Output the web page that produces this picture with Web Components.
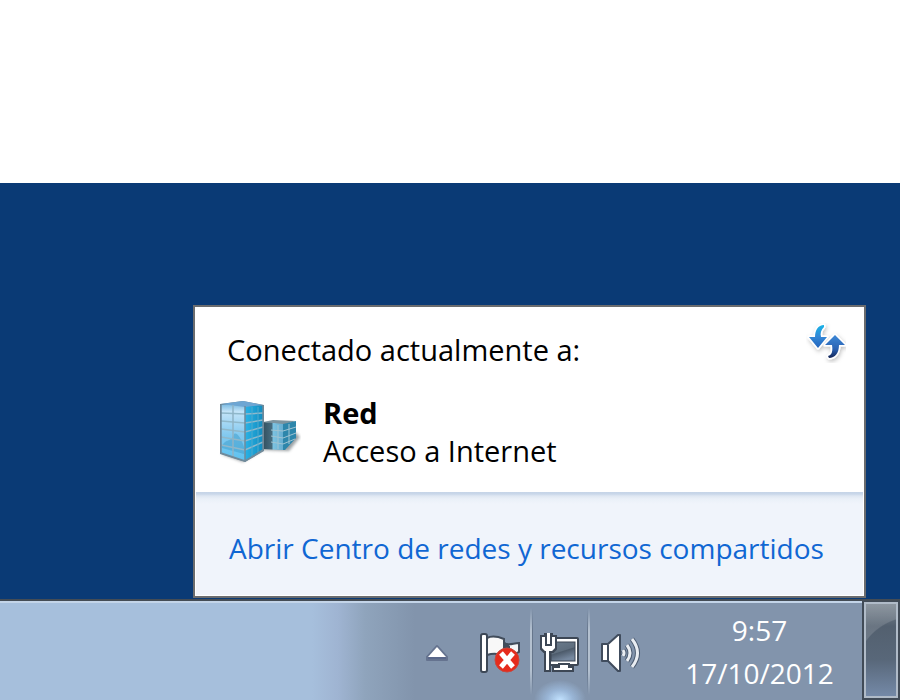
<!DOCTYPE html>
<html lang="es">
<head>
<meta charset="utf-8">
<meta name="viewport" content="width=device-width, initial-scale=1">
<title>Conexión de red</title>
<style>
  html, body { margin: 0; }
  body {
    min-height: 100vh;
    display: flex;
    flex-direction: column;
    background: #fff;
    font-family: "Open Sans", "Noto Sans", sans-serif;
    font-size: 28px;
    line-height: 38px;
    color: #000;
  }
  desk-top { flex: 1; margin-top: 183px; }
</style>
</head>
<body>
<desk-top>
  <network-flyout>
    <span slot="title">Conectado actualmente a:</span>
    <refresh-button slot="action"></refresh-button>
    <network-item>
      <span slot="name">Red</span>
      <span slot="status">Acceso a Internet</span>
    </network-item>
    <span slot="link">Abrir Centro de redes y recursos compartidos</span>
  </network-flyout>
</desk-top>
<task-bar>
  <tray-button kind="chevron" label="Mostrar iconos ocultos"></tray-button>
  <tray-button kind="flag" label="Centro de actividades"></tray-button>
  <tray-button kind="network" label="Red" active></tray-button>
  <tray-button kind="volume" label="Altavoces"></tray-button>
  <tray-clock><span slot="time">9:57</span><span slot="date">17/10/2012</span></tray-clock>
  <show-desktop slot="end"></show-desktop>
</task-bar>

<script>
const define = (name, html, setup) => {
  customElements.define(name, class extends HTMLElement {
    constructor() {
      super();
      const t = document.createElement('template');
      t.innerHTML = html;
      this.attachShadow({ mode: 'open' }).append(t.content.cloneNode(true));
    }
    connectedCallback() { if (setup) setup(this); }
  });
};

define('desk-top', `
<style>
  :host { display: flex; flex-direction: column; justify-content: flex-end; align-items: flex-end;
          box-sizing: border-box; padding: 0 34px 1px 16px; background: #0a3a75; }
</style>
<slot></slot>`);

define('network-flyout', `
<style>
  :host { display: block; box-sizing: border-box; width: 100%; max-width: 673px; background: #fff;
          border: 2px solid #6b6c6e; }
  header { display: flex; justify-content: space-between; align-items: flex-start; padding: 16px 18px 0 32px; font-size: 29px; }
  h1 { margin: 0; padding-top: 8px; font: inherit; }
  main { padding: 25px 24px 22px; font-size: 29px; }
  main { padding-left: 22px; }
  footer { border: 1px solid #fff; border-top: 0; padding: 37px 33px 28px; text-align: left;
           background: linear-gradient(#c5d4e7 0, #c9d7e9 2px, #dfe7f2 4px, #eaf0f8 7px, #f0f4fb 12px); }
  a { color: #1067d3; text-decoration: none; white-space: nowrap; }
</style>
<header><h1><slot name="title"></slot></h1><slot name="action"></slot></header>
<main><slot></slot></main>
<footer><a href="#centro"><slot name="link"></slot></a></footer>`);

define('refresh-button', `
<style>
  :host { display: block; }
  button { display: block; padding: 0; border: 0; background: none; }
  svg { display: block; }
</style>
<button aria-label="Actualizar">
<svg width="40" height="40" viewBox="0 0 40 40">
  <defs>
    <linearGradient id="a" x1="0" y1="0" x2="0" y2="1"><stop offset="0" stop-color="#18b4e8"/><stop offset=".5" stop-color="#3387d6"/><stop offset="1" stop-color="#2465bd"/></linearGradient>
    <linearGradient id="b" x1="0" y1="0" x2="0" y2="1"><stop offset="0" stop-color="#3c88d6"/><stop offset=".6" stop-color="#2b63b4"/><stop offset="1" stop-color="#142455"/></linearGradient>
    <filter id="s" x="-.3" y="-.3" width="1.8" height="1.8"><feDropShadow dx="1" dy="2" stdDeviation="2" flood-opacity=".25"/></filter>
  </defs>
  <g filter="url(#s)" stroke="#fff" stroke-width="3" stroke-linejoin="round" paint-order="stroke">
    <path fill="url(#a)" d="M18 2C12 2 9 7 9 14H3L12 25L21 14H15C14 10 15 7 18 4Z"/>
    <path fill="url(#b)" d="M29 12L39 22H33C33 30 29 35 23 35L22 33C26 32 27 28 26 22H19Z"/>
  </g>
</svg></button>`);

define('network-item', `
<style>
  :host { display: flex; align-items: center; gap: 22px; }
  svg { flex: none; display: block; }
  strong, span { display: block; }
</style>
<svg width="84" height="68" viewBox="0 0 84 68" aria-hidden="true">
  <defs>
    <linearGradient id="l" x1="0" y1="0" x2="0" y2="1"><stop offset="0" stop-color="#6fb4de"/><stop offset=".15" stop-color="#c4e4f8"/><stop offset=".55" stop-color="#83c9ef"/><stop offset="1" stop-color="#5cc2f0"/></linearGradient>
    <linearGradient id="r" x1="0" y1="0" x2="1" y2="0"><stop offset="0" stop-color="#2ab2e5"/><stop offset="1" stop-color="#128cbf"/></linearGradient>
    <linearGradient id="d" x1="0" y1="0" x2="1" y2="0"><stop offset="0" stop-color="#33505f"/><stop offset=".45" stop-color="#476d80"/><stop offset=".5" stop-color="#7cc3e2"/><stop offset="1" stop-color="#66add0"/></linearGradient>
    <filter id="f" x="-.2" y="-.2" width="1.4" height="1.4"><feGaussianBlur stdDeviation="1.5"/></filter>
  </defs>
  <path d="M26 64L46 52L72 53L83 39L78 34L44 48L4 56Z" fill="#4a5358" opacity=".55" filter="url(#f)"/>
  <path d="M46 24L56 22L79 23L66 27Z" fill="#7d949f"/>
  <path d="M46 24L66 26V52L46 51Z" fill="url(#d)"/>
  <path d="M66 26L79 23V40L68 52H66Z" fill="#2d86ab"/>
  <path d="M54 32L66 33L79 29M54 38L66 40L79 35M54 44L66 46L78 41M61 27V51M72 26V46" fill="none" stroke="#9fc4d3" stroke-width="1"/>
  <path d="M3 6L26 3L47 7V53L28 64L3 56Z" fill="#6c8796"/>
  <path d="M4 7L28 5V63L4 55Z" fill="url(#l)"/>
  <path d="M28 5L46 8V52L28 63Z" fill="url(#r)"/>
  <path d="M4 6L26 3L46 7L28 9Z" fill="#6ea6d3"/>
  <path d="M5 48C9 40 14 45 17 36C20 34 24 40 27 49V56L5 50Z" fill="#3e9cca" opacity=".5"/>
  <path d="M4 15L28 16L46 15M4 23L28 25L46 22M4 31L28 34L46 29M4 39L28 43L46 37M4 47L28 52L46 44" fill="none" stroke="#8fb8cb" stroke-width="1.5"/>
  <path d="M16 7V59" fill="none" stroke="#8fb3c6" stroke-width="1.5"/>
  <path d="M35 9V58M41 9V55" fill="none" stroke="#4fa9cd" stroke-width="1"/>
  <path d="M4 7V55L28 63V8M46 8V52L28 63" fill="none" stroke="#708b9c" stroke-width="1.5"/>
</svg>
<div><strong><slot name="name"></slot></strong><span><slot name="status"></slot></span></div>`);

define('task-bar', `
<style>
  :host { display: flex; justify-content: flex-end; align-items: stretch; height: 99px; flex: none;
          border-top: 2px solid #444c55; box-shadow: inset 0 2px #c3d4e8; color: #fff;
          background: linear-gradient(to right, #a6bfdc 0, #a6bfdc calc(100% - 588px), #9fb4d2 calc(100% - 562px), #8fa4bc calc(100% - 535px), #8294ac calc(100% - 485px), #8294ac 100%); }
  nav { display: flex; }
</style>
<nav aria-label="Área de notificación"><slot></slot></nav>
<slot name="end"></slot>`);

const icons = {
  chevron: `<svg width="24" height="18" viewBox="0 0 24 18">
    <path d="M12 2L22 13V16H2V13Z" fill="#59678a" stroke="#65738f" stroke-width="2" stroke-linejoin="round"/>
    <path d="M12 3L21 13H3Z" fill="#fff"/></svg>`,
  flag: `<svg width="42" height="42" viewBox="0 0 42 42">
    <path d="M24 12L28 12C32 13 35 11 40 11V20L32 24L24 22Z" fill="#f4f5f7" stroke="#414c5b" stroke-width="2"/>
    <path d="M8 6C14 3 20 5 25 7V24C19 21 14 21 8 23Z" fill="#f8f8f8" stroke="#414c5b" stroke-width="2"/>
    <path d="M26 10V20L31 18V14Z" fill="#414c5b"/>
    <rect x="2" y="2" width="6" height="38" rx="2" fill="#fff" stroke="#3d4856" stroke-width="2"/>
    <circle cx="28" cy="28" r="12" fill="#e62b1c" stroke="#c8473d"/>
    <path d="M22 21L34 35M34 21L22 35" stroke="#fff" stroke-width="5"/></svg>`,
  network: `<svg width="42" height="42" viewBox="0 0 42 42">
    <defs><linearGradient id="n" x1="0" y1="0" x2=".4" y2="1"><stop offset="0" stop-color="#6b7b8c"/><stop offset=".55" stop-color="#5f6e7e"/><stop offset=".6" stop-color="#4d5b6b"/><stop offset="1" stop-color="#76889f"/></linearGradient></defs>
    <rect x="10" y="6" width="29" height="27" rx="1" fill="#fff" stroke="#3d4755" stroke-width="2"/>
    <rect x="12" y="10" width="24" height="19" fill="url(#n)" stroke="#3d4755"/>
    <path d="M20 32H30V35H34V39H14V35H20Z" fill="#fff" stroke="#3d4755" stroke-width="2"/>
    <rect x="6" y="18" width="5" height="21" fill="#fff" stroke="#3d4755" stroke-width="2"/>
    <path d="M2 4H6V2H13V4H17V17L14 20H5L2 17Z" fill="#3d4755" stroke="#3d4755" stroke-width="2"/>
    <path d="M3 5H6V14H13V5H16V16L13 19H6L3 16Z" fill="#fff"/>
    <rect x="8" y="1" width="3" height="11" fill="#fff"/>
    <rect x="7" y="17" width="3" height="20" fill="#fff"/></svg>`,
  volume: `<svg width="42" height="42" viewBox="0 0 42 42">
    <path d="M2 12H8L18 3H20V39H18L8 29H2Z" fill="#fff" stroke="#404c5d" stroke-width="2" stroke-linejoin="round"/>
    <path d="M8 13V29" stroke="#404c5d" stroke-width="2"/>
    <g fill="none" stroke="#4c5b70" stroke-width="5"><path d="M23 18Q25 21 23 24M27 13Q33 21 27 29M32 7Q43 21 32 35"/></g>
    <g fill="none" stroke="#e9edf2" stroke-width="3"><path d="M23 18Q25 21 23 24M27 13Q33 21 27 29M32 7Q43 21 32 35"/></g></svg>`
};

define('tray-button', `
<style>
  :host { display: flex; width: 60px; }
  :host([kind="chevron"]) { width: 66px; }
  :host([kind="volume"]) { width: 62px; }
  :host([active]) button {
    border-image: linear-gradient(transparent 8%, #b4c1d0 30%, #b4c1d0 70%, transparent 94%) 1;
    background: linear-gradient(transparent 8%, #66768c 30%, #66768c 70%, transparent 94%) 0 0 / 1px 100% no-repeat,
                linear-gradient(transparent 8%, #66768c 30%, #66768c 70%, transparent 94%) 100% 0 / 1px 100% no-repeat,
                radial-gradient(ellipse 26px 20px at 50% 100%, #c2e2ff 0, #a4c5eaaa 50%, transparent 100%); }
  button { flex: 1; display: grid; place-items: center; padding: 4px 0 0; border: 0 solid transparent;
           border-width: 0 2px; background: none; }
  svg { display: block; }
</style>
<button></button>`, el => {
  const b = el.shadowRoot.querySelector('button');
  b.setAttribute('aria-label', el.getAttribute('label'));
  b.innerHTML = icons[el.getAttribute('kind')];
});

define('tray-clock', `
<style>
  :host { display: block; box-sizing: border-box; width: 210px; padding: 8px 0 0 5px; text-align: center; line-height: 43px; }
  time { display: block; }
</style>
<time><slot name="time"></slot></time><time><slot name="date"></slot></time>`);

define('show-desktop', `
<style>
  :host { display: flex; width: 38px; background: #414b57; }
  button { flex: 1; margin: 1px 2px 2px; border: 2px solid #b0bbc8; padding: 0;
           background: radial-gradient(ellipse 60px 60px at 48px 72px, transparent 0, transparent 98%, #ffffff22 100%), linear-gradient(#7c8792, #53606f 24%, #586779 60%, #7489a7); }
</style>
<button aria-label="Mostrar escritorio"></button>`);
</script>
</body>
</html>
